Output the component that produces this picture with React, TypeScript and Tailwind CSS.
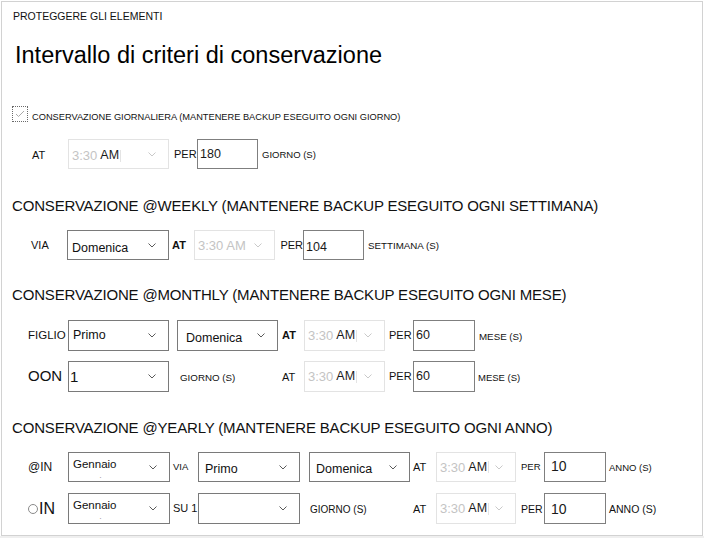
import type { ReactNode } from 'react'

function Chevron({ light }: { light?: boolean }) {
  return (
    <svg width="8" height="5" viewBox="0 0 8 5" className="shrink-0">
      <polyline points="0.5,0.5 4,4 7.5,0.5" fill="none" stroke={light ? '#c9c9c9' : '#5a5a5a'} strokeWidth="1" />
    </svg>
  )
}

interface BoxProps {
  className: string
  inner?: string
  disabled?: boolean
  children?: ReactNode
}

// Campo a tendina: testo a sinistra, freccia a destra
function Box({ className, inner = '', disabled, children }: BoxProps) {
  return (
    <div
      className={`flex shrink-0 items-center justify-between border pr-[12px] ${disabled ? 'border-[#e3e3e3]' : 'border-[#7a7a7a]'} ${className}`}
    >
      <div className={`flex items-center ${inner}`}>{children}</div>
      <Chevron light={disabled} />
    </div>
  )
}

function Time({ allGray }: { allGray?: boolean }) {
  return (
    <span className="flex items-center text-[13px] leading-none">
      <span className="text-[#c4c4c4]">3:30</span>
      <span className={`ml-[3px] ${allGray ? 'text-[#c4c4c4]' : 'text-[#1a1a1a] text-[12.5px]'}`}>AM</span>
      {!allGray && <span className="ml-[1px] h-[12px] w-px bg-[#e4e4e4]" />}
    </span>
  )
}

function Input({ className, value, text = 'text-[12.5px]' }: { className: string; value: string; text?: string }) {
  return (
    <div className={`flex shrink-0 items-center border border-[#7f7f7f] pl-[2px] ${className}`}>
      <span className={`leading-none text-[#1a1a1a] ${text}`}>{value}</span>
    </div>
  )
}

function Section({ children, className }: { children: ReactNode; className: string }) {
  return (
    <div className={`h-[18px] pl-[10px] text-[15px] leading-[18px] tracking-[-0.17px] text-[#111] ${className}`}>
      {children}
    </div>
  )
}

export default function App() {
  return (
    <div className="h-[538px] w-[704px] bg-white font-['Liberation_Sans',Arial,sans-serif] text-[#111]">
      <div className="ml-[1px] mt-[1px] h-[535px] w-[702px] border border-[#d2d2d2]">
        <div className="mt-[8px] h-[12px] pl-[11px] text-[10.5px] leading-[12px]">PROTEGGERE GLI ELEMENTI</div>
        <h1 className="mt-[19px] h-[28px] pl-[13px] text-[23.5px] leading-[28px] text-black">
          Intervallo di criteri di conservazione
        </h1>

        {/* Giornaliera */}
        <div className="mt-[37px] flex h-[16px] items-end pl-[10px]">
          <div className="flex h-[16px] w-[16px] items-center justify-center border border-dotted border-[#6a6a6a]">
            <svg width="10" height="8" viewBox="0 0 10 8">
              <polyline points="1,4 3.5,6.5 9,1" fill="none" stroke="#a9a9a9" strokeWidth="1" />
            </svg>
          </div>
          <span className="ml-[4px] text-[9.25px] leading-[10px]">
            CONSERVAZIONE GIORNALIERA (MANTENERE BACKUP ESEGUITO OGNI GIORNO)
          </span>
        </div>
        <div className="mt-[17px] flex h-[30px] items-center">
          <div className="w-[66px] pl-[30px] pt-[3px] text-[11px]">AT</div>
          <Box className="h-[30px] w-[101px]" inner="pl-[3px] pt-[3px]" disabled>
            <Time />
          </Box>
          <div className="w-[28px] pl-[5px] text-[11px]">PER</div>
          <Input className="h-[30px] w-[61px]" value="180" />
          <div className="pl-[4px] pt-[3px] text-[9.5px]">GIORNO (S)</div>
        </div>

        {/* Settimanale */}
        <Section className="mt-[28px]">CONSERVAZIONE @WEEKLY (MANTENERE BACKUP ESEGUITO OGNI SETTIMANA)</Section>
        <div className="mt-[15px] flex h-[30px] items-center">
          <div className="w-[65px] pl-[29px] text-[11px]">VIA</div>
          <Box className="h-[30px] w-[102px]" inner="pl-[4px] pt-[7px] text-[12.5px] leading-none">
            Domenica
          </Box>
          <div className="w-[25px] pl-[3px] text-[11px] font-bold">AT</div>
          <Box className="h-[30px] w-[81px]" inner="pl-[3px]" disabled>
            <Time allGray />
          </Box>
          <div className="w-[28px] text-right text-[11px]">PER</div>
          <Input className="h-[30px] w-[61px]" value="104" text="text-[12.5px] pt-[4px]" />
          <div className="pl-[4px] pt-[2px] text-[9.75px]">SETTIMANA (S)</div>
        </div>

        {/* Mensile */}
        <Section className="mt-[26px]">CONSERVAZIONE @MONTHLY (MANTENERE BACKUP ESEGUITO OGNI MESE)</Section>
        <div className="mt-[16px] flex h-[31px] items-center">
          <div className="w-[66px] pl-[26px] text-[11.5px]">FIGLIO</div>
          <Box className="h-[31px] w-[101px]" inner="pl-[4px] pb-[1px] text-[12.5px] leading-none">
            Primo
          </Box>
          <Box className="ml-[8px] h-[31px] w-[101px]" inner="pl-[8px] pt-[6px] text-[12.5px] leading-none">
            Domenica
          </Box>
          <div className="w-[26px] pl-[4px] text-[11px] font-bold">AT</div>
          <Box className="h-[31px] w-[81px]" inner="pl-[3px]" disabled>
            <Time />
          </Box>
          <div className="w-[28px] pl-[4px] text-[11px]">PER</div>
          <Input className="h-[31px] w-[62px]" value="60" />
          <div className="pl-[4px] pt-[3px] text-[9.75px]">MESE (S)</div>
        </div>
        <div className="mt-[10px] flex h-[31px] items-center">
          <div className="w-[66px] pl-[26px] text-[15px]">OON</div>
          <Box className="h-[31px] w-[101px]" inner="pl-[1px] text-[15px] leading-none">
            1
          </Box>
          <div className="w-[113px] pl-[11px] pt-[3px] text-[9.75px]">GIORNO (S)</div>
          <div className="w-[22px] pt-[2px] text-[11px]">AT</div>
          <Box className="h-[31px] w-[81px]" inner="pl-[3px]" disabled>
            <Time />
          </Box>
          <div className="w-[28px] pl-[4px] text-[11px]">PER</div>
          <Input className="h-[31px] w-[62px]" value="60" />
          <div className="pl-[3px] pt-[3px] text-[9.5px]">MESE (S)</div>
        </div>

        {/* Annuale */}
        <Section className="mt-[27px]">CONSERVAZIONE @YEARLY (MANTENERE BACKUP ESEGUITO OGNI ANNO)</Section>
        <div className="mt-[15px] flex h-[30px] items-center">
          <div className="w-[66px] pl-[26px] text-[12px]">@IN</div>
          <Box className="h-[30px] w-[102px]" inner="relative pl-[4px] pb-[5px] text-[11.5px] leading-none">
            Gennaio
            <span className="absolute left-[30px] top-[12px] text-[8px] text-[#777]">ˏ</span>
          </Box>
          <div className="w-[28px] pl-[3px] text-[9.5px]">VIA</div>
          <Box className="h-[30px] w-[102px]" inner="pl-[6px] pt-[5px] text-[12.5px] leading-none">
            Primo
          </Box>
          <Box className="ml-[9px] h-[30px] w-[101px]" inner="pl-[6px] pt-[5px] text-[12.5px] leading-none">
            Domenica
          </Box>
          <div className="w-[26px] pl-[3px] text-[11px]">AT</div>
          <Box className="h-[30px] w-[80px]" inner="pl-[3px]" disabled>
            <Time />
          </Box>
          <div className="w-[28px] pl-[5px] text-[9.5px]">PER</div>
          <Input className="h-[30px] w-[62px]" value="10" text="text-[14px] pb-[2px] pl-[4px]" />
          <div className="pl-[3px] pt-[2px] text-[9.5px]">ANNO (S)</div>
        </div>
        <div className="mt-[11px] flex h-[31px] items-center">
          <div className="flex w-[66px] items-center pl-[26px]">
            <span className="h-[10px] w-[10px] rounded-full border border-[#8a8a8a]" />
            <span className="ml-[1px] text-[16px] leading-none">IN</span>
          </div>
          <Box className="h-[31px] w-[102px]" inner="relative pl-[4px] pb-[5px] text-[11.5px] leading-none">
            Gennaio
            <span className="absolute left-[30px] top-[12px] text-[8px] text-[#777]">ˏ</span>
          </Box>
          <div className="w-[28px] pl-[3px] text-[11px]">SU 1</div>
          <Box className="h-[31px] w-[102px]" />
          <div className="w-[113px] pl-[10px] pt-[2px] text-[10px]">GIORNO (S)</div>
          <div className="w-[23px] pt-[2px] text-[11px]">AT</div>
          <Box className="h-[31px] w-[80px]" inner="pl-[3px]" disabled>
            <Time />
          </Box>
          <div className="w-[28px] pl-[5px] pt-[2px] text-[10.5px]">PER</div>
          <Input className="h-[31px] w-[62px]" value="10" text="text-[14px] pl-[4px]" />
          <div className="pl-[3px] pt-[2px] text-[10.5px]">ANNO (S)</div>
        </div>
      </div>
      <div className="h-[2px] bg-[#efefef]" />
    </div>
  )
}
